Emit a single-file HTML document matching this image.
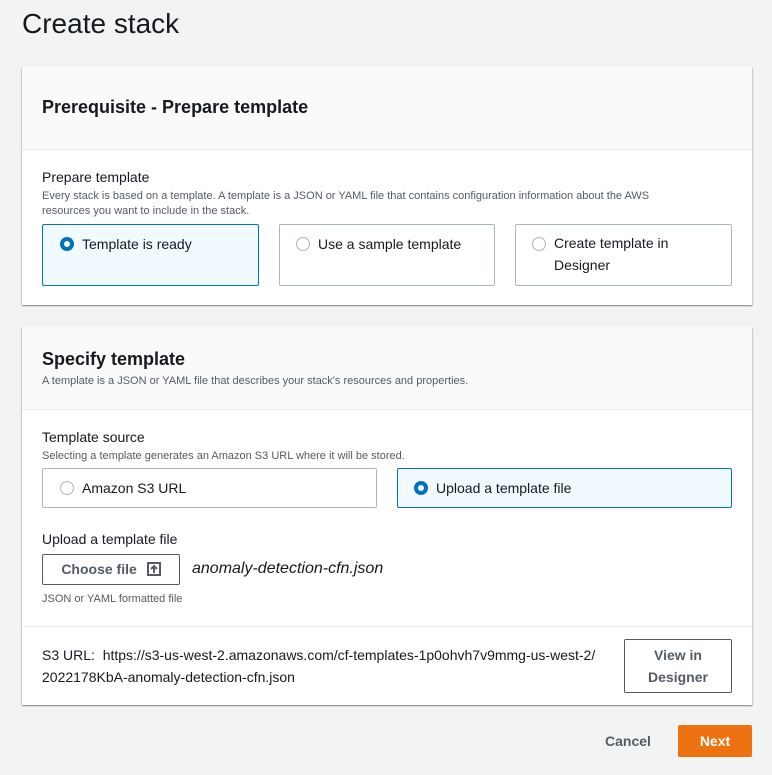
<!DOCTYPE html><html><head><style>
body{margin:0;width:772px;height:775px;background:#f2f3f3;font-family:"Liberation Sans",sans-serif;color:#16191f;position:relative;overflow:hidden}
.a{position:absolute}
.card{position:absolute;left:22px;width:730px;background:#fff;box-shadow:0 1px 1px rgba(0,28,36,.3),1px 1px 1px rgba(0,28,36,.15),-1px 1px 1px rgba(0,28,36,.15)}
.hd{position:absolute;left:0;right:0;top:0;background:#fafafa;border-bottom:1px solid #eaeded}
.h2{font-size:18px;font-weight:bold}
.lbl{font-size:14px}
.desc{font-size:11px;color:#545b64;line-height:15px;white-space:nowrap}
.tile{position:absolute;border:1px solid #aab7b8;border-radius:2px;font-size:14px;box-sizing:border-box}
.tile.sel{border-color:#0073bb;background:#f1faff}
.r{position:absolute;width:14px;height:14px;border:1px solid #aab7b8;border-radius:50%;box-sizing:border-box;background:#fff}
.r.on{border:4px solid #0073bb}
.btn{position:absolute;border:1px solid #545b64;border-radius:2px;font-weight:bold;font-size:14px;color:#545b64;box-sizing:border-box;background:#fff;text-align:center}
</style></head><body>
<div class="a" style="left:22px;top:8px;font-size:28px">Create stack</div>
<div class="card" style="top:67px;height:238px">
<div class="hd" style="height:82px"><div class="a h2" style="left:20px;top:30px">Prerequisite - Prepare template</div></div>
<div class="a lbl" style="left:20px;top:102px">Prepare template</div>
<div class="a desc" style="left:20px;top:122px">Every stack is based on a template. A template is a JSON or YAML file that contains configuration information about the AWS<br>resources you want to include in the stack.</div>
<div class="tile sel" style="left:20px;top:157px;width:217px;height:62px"><div class="r on" style="left:17px;top:12px"></div><div class="a" style="left:39px;top:11px">Template is ready</div></div>
<div class="tile" style="left:257px;top:157px;width:216px;height:62px"><div class="r" style="left:16px;top:12px"></div><div class="a" style="left:38px;top:11px">Use a sample template</div></div>
<div class="tile" style="left:493px;top:157px;width:217px;height:62px"><div class="r" style="left:16px;top:12px"></div><div class="a" style="left:38px;top:7px;line-height:22px">Create template in<br>Designer</div></div>
</div>
<div class="card" style="top:327px;height:378px">
<div class="hd" style="height:82px"><div class="a h2" style="left:20px;top:22px">Specify template</div><div class="a desc" style="left:20px;top:47px">A template is a JSON or YAML file that describes your stack's resources and properties.</div></div>
<div class="a lbl" style="left:20px;top:102px">Template source</div>
<div class="a desc" style="left:20px;top:122px">Selecting a template generates an Amazon S3 URL where it will be stored.</div>
<div class="tile" style="left:20px;top:141px;width:335px;height:40px"><div class="r" style="left:17px;top:12px"></div><div class="a" style="left:39px;top:11px">Amazon S3 URL</div></div>
<div class="tile sel" style="left:375px;top:141px;width:335px;height:40px"><div class="r on" style="left:16px;top:12px"></div><div class="a" style="left:38px;top:11px">Upload a template file</div></div>
<div class="a lbl" style="left:20px;top:204px">Upload a template file</div>
<div class="btn" style="left:20px;top:227px;width:138px;height:31px;line-height:29px">Choose file <svg width="14" height="14" viewBox="0 0 14 14" style="vertical-align:-2px;margin-left:6px"><rect x="1" y="1" width="12" height="12" fill="none" stroke="#545b64" stroke-width="2"/><path d="M7 11V4M4 7l3-3 3 3" fill="none" stroke="#545b64" stroke-width="2"/></svg></div>
<div class="a" style="left:170px;top:233px;font-size:16px;font-style:italic">anomaly-detection-cfn.json</div>
<div class="a desc" style="left:20px;top:265px">JSON or YAML formatted file</div>
<div class="a" style="left:0;right:0;top:299px;border-top:1px solid #eaeded"></div>
<div class="a lbl" style="left:20px;top:317px;line-height:22px">S3 URL:&nbsp; https://s3-us-west-2.amazonaws.com/cf-templates-1p0ohvh7v9mmg-us-west-2/<br>2022178KbA-anomaly-detection-cfn.json</div>
<div class="btn" style="left:602px;top:312px;width:108px;height:54px;line-height:22px;padding-top:4px">View in<br>Designer</div>
</div>
<div class="a" style="left:605px;top:733px;font-size:14px;font-weight:bold;color:#545b64">Cancel</div>
<div class="a" style="left:678px;top:725px;width:74px;height:32px;background:#ec7211;border-radius:2px;color:#fff;font-weight:bold;font-size:14px;text-align:center;line-height:32px">Next</div>
</body></html>
